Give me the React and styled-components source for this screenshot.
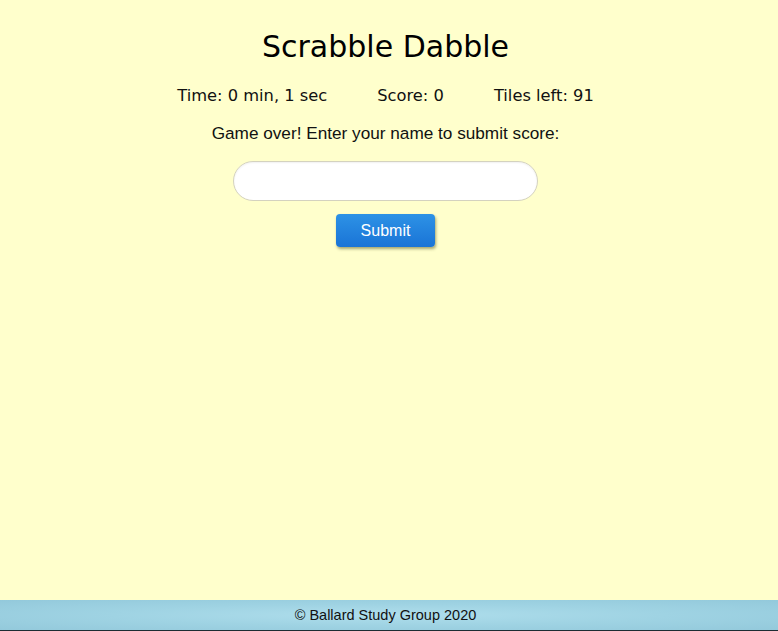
import React, { useState } from 'react';
import styled, { createGlobalStyle } from 'styled-components';

const GlobalStyle = createGlobalStyle`
    html, body {
        margin: 0;
        padding: 0;
        background: #ffffcc;
    }
    #root {
        min-height: 100vh;
    }
`;

const App = () => {
    const [name, setName] = useState('');
    const stats = ['Time: 0 min, 1 sec', 'Score: 0', 'Tiles left: 91'];

    return (
        <Page>
            <GlobalStyle />
            <Main>
                <Title>Scrabble Dabble</Title>
                <Stats>
                    {stats.map(s => (
                        <span key={s}>{s}</span>
                    ))}
                </Stats>
                <Prompt>Game over! Enter your name to submit score:</Prompt>
                <NameInput value={name} onChange={e => setName(e.target.value)} />
                <SubmitButton type="button">Submit</SubmitButton>
            </Main>
            <Footer>© Ballard Study Group 2020</Footer>
        </Page>
    );
};

const Page = styled.div`
    min-height: 100vh;
    display: flex;
    flex-direction: column;
    background: #ffffcc;
`;

const Main = styled.main`
    flex: 1;
    display: flex;
    flex-direction: column;
    align-items: center;
    padding: 29px 7px 0 0;
`;

const Title = styled.h1`
    margin: 0;
    font-family: 'DejaVu Sans', Verdana, sans-serif;
    font-weight: normal;
    font-size: 30px;
    line-height: 35px;
    color: #000;
`;

const Stats = styled.div`
    margin-top: 22px;
    display: flex;
    gap: 50px;
    font-family: 'DejaVu Sans', Verdana, sans-serif;
    font-size: 16.3px;
    line-height: 19px;
    color: #111;
`;

const Prompt = styled.p`
    margin: 18px 0 0;
    font-family: 'Liberation Sans', Arial, sans-serif;
    font-size: 17.2px;
    line-height: 20px;
    color: #111;
`;

const NameInput = styled.input`
    margin-top: 18px;
    box-sizing: border-box;
    width: 305px;
    height: 40px;
    padding: 0 16px;
    border: 1px solid #d4d2bf;
    border-radius: 20px;
    background: #fff;
    box-shadow: inset 0 1px 2px rgba(0, 0, 0, 0.06);
    font-family: 'Liberation Sans', Arial, sans-serif;
    font-size: 16px;
    outline: none;
`;

const SubmitButton = styled.button`
    margin-top: 13px;
    width: 99px;
    height: 33px;
    border: none;
    border-radius: 4px;
    background: linear-gradient(#2d92e6, #1a74d6);
    box-shadow: 1px 2px 3px rgba(60, 60, 0, 0.45);
    color: #fff;
    font-family: 'Liberation Sans', Arial, sans-serif;
    font-size: 16px;
    cursor: pointer;
`;

const Footer = styled.footer`
    height: 30px;
    border-bottom: 1px solid #1d2c33;
    display: flex;
    align-items: center;
    justify-content: center;
    padding-right: 7px;
    background: radial-gradient(ellipse at center, #afdeec 0%, #9fd3e3 50%, #93c9db 100%);
    font-family: 'Liberation Sans', Arial, sans-serif;
    font-size: 14.5px;
    color: #111;
`;

export default App;
